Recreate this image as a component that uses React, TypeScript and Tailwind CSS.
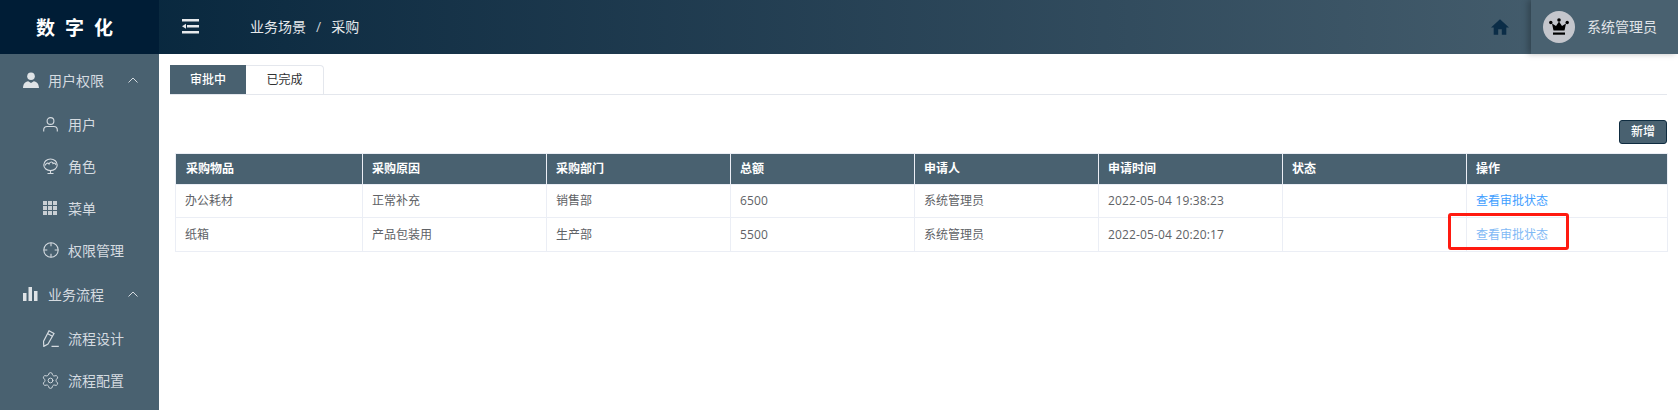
import { Settings } from "lucide-react";

const columns = [
  { title: "采购物品", width: "w-[187px]" },
  { title: "采购原因", width: "w-[184px]" },
  { title: "采购部门", width: "w-[184px]" },
  { title: "总额", width: "w-[184px]" },
  { title: "申请人", width: "w-[184px]" },
  { title: "申请时间", width: "w-[184px]" },
  { title: "状态", width: "w-[184px]" },
  { title: "操作", width: "w-[201px]" },
];

const rows = [
  ["办公耗材", "正常补充", "销售部", "6500", "系统管理员", "2022-05-04 19:38:23", ""],
  ["纸箱", "产品包装用", "生产部", "5500", "系统管理员", "2022-05-04 20:20:17", ""],
];

function Chevron() {
  return (
    <svg width="10" height="6" viewBox="0 0 10 6" fill="none" stroke="#d5dbe0" strokeWidth="1" className="ml-auto mr-[21px]">
      <path d="M0.5 5.500 5 1l4.500 4.500" />
    </svg>
  );
}

function PersonSolid() {
  return (
    <svg width="16" height="16" viewBox="0 0 16 16" fill="#dfe3e6">
      <circle cx="8" cy="4.200" r="3.800" />
      <path d="M0 16c.3-4.400 2-6.200 5.200-6.800L8 11l2.800-1.800C14 9.800 15.700 11.600 16 16z" />
    </svg>
  );
}

function Bars() {
  return (
    <svg width="15" height="14" viewBox="0 0 15 14" fill="#dfe3e6">
      <rect x="0" y="6" width="3.500" height="8" />
      <rect x="5.500" y="0" width="3.500" height="14" />
      <rect x="11" y="4" width="3.500" height="10" />
    </svg>
  );
}

function UserOutline() {
  return (
    <svg width="15" height="15" viewBox="0 0 15 15" fill="none" stroke="#d5dbe0" strokeWidth="1.100">
      <circle cx="7.500" cy="4" r="3.400" />
      <path d="M.7 14.500v-1.500c0-2.500 1.500-3.500 3.500-3.500h6.600c2 0 3.500 1 3.500 3.500v1.500" />
    </svg>
  );
}

function RoleIcon() {
  return (
    <svg width="15" height="16" viewBox="0 0 15 16" fill="none" stroke="#d5dbe0" strokeWidth="1.100">
      <path d="M.8 7a6.700 6 0 0 1 13.400 0c0 3.300-3 5.600-6.700 5.600S.8 10.300.8 7z" />
      <path d="M2 7.500c1-2.500 3-3 4-1.500 1-2.500 3.500-2.500 4-.5 1-.8 2.500-.3 3 1.500" />
      <path d="M7.500 12.500v3M4.500 15.500h6" />
    </svg>
  );
}

function GridIcon() {
  return (
    <svg width="14" height="14" viewBox="0 0 14 14" fill="#c9cfd4">
      {[0, 5, 10].map((y) =>
        [0, 5, 10].map((x) => <rect key={`${x}-${y}`} x={x} y={y} width="4" height="4" />)
      )}
    </svg>
  );
}

function TargetIcon() {
  return (
    <svg width="16" height="16" viewBox="0 0 16 16" fill="none" stroke="#d5dbe0" strokeWidth="1.100">
      <circle cx="8" cy="8" r="7.200" />
      <path d="M8 .8v3.500M8 11.700v3.500M.8 8h3.500M11.700 8h3.500" />
    </svg>
  );
}

function PencilIcon() {
  return (
    <svg width="16" height="17" viewBox="0 0 16 17" fill="none" stroke="#d5dbe0" strokeWidth="1.200">
      <path d="M6 .8l5 2.800-6 10.500-4.200 2.300-.3-5z" />
      <path d="M4.400 3.400l5 2.800M8.500 16.300h7.300" />
    </svg>
  );
}

function SideGroup({ icon, label, className = "" }: { icon: React.ReactNode; label: string; className?: string }) {
  return (
    <div className={`mb-px flex h-[44px] items-center pl-[23px] text-[14px] text-[#d5dbe0] ${className}`}>
      <span className="flex w-[25px] shrink-0">{icon}</span>
      {label}
      <Chevron />
    </div>
  );
}

function SideItem({ icon, label }: { icon: React.ReactNode; label: string }) {
  return (
    <div className="flex h-[42px] items-center pl-[43px] text-[14px] text-[#d5dbe0]">
      <span className="flex w-[25px] shrink-0">{icon}</span>
      {label}
    </div>
  );
}

export default function App() {
  return (
    <div className="flex h-[410px] w-[1678px] flex-col overflow-hidden bg-white font-['Open_Sans','Noto_Sans_CJK_SC',sans-serif] text-[12px] text-[#606266]">
      {/* Header */}
      <header className="relative z-10 flex h-[54px] shrink-0 items-center bg-gradient-to-r from-[#03233a] to-[#496170]">
        <div className="flex h-full w-[159px] shrink-0 items-center justify-center bg-[#001d36] font-['Noto_Sans_CJK_SC',serif] text-[19px] font-bold tracking-[10px] text-white">
          数字化
        </div>
        <svg width="17" height="15" viewBox="0 0 17 15" fill="#e6e9ec" className="mb-[2px] ml-[23px]">
          <rect x="0" y="0" width="17" height="2.500" />
          <rect x="5" y="6" width="12" height="2.500" />
          <path d="M0 7.200 4 4.800v5z" />
          <rect x="0" y="12" width="17" height="2.500" />
        </svg>
        <div className="mb-[2px] ml-[51px] flex items-center text-[14px] text-[#e6e9ec]">
          <span>业务场景</span>
          <span className="mx-[10px] text-[#c5cdd3]">/</span>
          <span>采购</span>
        </div>
        <svg width="18" height="16" viewBox="2 3 20 17" fill="#0b2d47" className="ml-auto mr-[22px]">
          <path d="M10 20v-6h4v6h5v-8h3L12 3 2 12h3v8z" />
        </svg>
        <div className="flex h-full w-[147px] items-center bg-[#496170] pl-[12px] shadow-[-3px_0_6px_rgba(0,0,0,0.25)]">
          <div className="flex h-[32px] w-[32px] items-center justify-center rounded-full bg-[#c4c6cc]">
            <svg width="20" height="18" viewBox="0 0 20 18" fill="#000">
              <circle cx="10" cy="2" r="1.800" />
              <circle cx="1.800" cy="4.500" r="1.700" />
              <circle cx="18.200" cy="4.500" r="1.700" />
              <path d="M10 3.500 13 8l4-2.500-1.500 7h-11L3 5.500 7 8z" />
              <rect x="4" y="14.500" width="12" height="2.200" />
            </svg>
          </div>
          <span className="mb-px ml-[12px] text-[14px] text-[#e0e4e8]">系统管理员</span>
        </div>
      </header>

      <div className="flex min-h-0 flex-1">
        {/* Sidebar */}
        <aside className="w-[159px] shrink-0 overflow-hidden bg-[#496170] pt-[4px]">
          <SideGroup icon={<PersonSolid />} label="用户权限" />
          <SideItem icon={<UserOutline />} label="用户" />
          <SideItem icon={<RoleIcon />} label="角色" />
          <SideItem icon={<GridIcon />} label="菜单" />
          <SideItem icon={<TargetIcon />} label="权限管理" />
          <SideGroup icon={<Bars />} label="业务流程" className="mt-px" />
          <SideItem icon={<PencilIcon />} label="流程设计" />
          <SideItem icon={<Settings size={19} strokeWidth={1.2} className="-ml-[2px]" />} label="流程配置" />
        </aside>

        {/* Main */}
        <main className="min-w-0 flex-1 pt-[11px] pl-[11px] pr-[11px]">
          <div className="flex h-[30px] border-b border-[#e4e7ed]">
            <div className="flex w-[76px] items-center justify-center bg-[#496170] font-medium text-white">审批中</div>
            <div className="flex w-[78px] items-center justify-center rounded-tr border-t border-r border-[#e4e7ed] text-[#303133]">已完成</div>
          </div>

          <div className="mt-[25px] flex justify-end">
            <button className="h-[24px] w-[48px] rounded-[3px] border border-[#0f2c40] bg-[#496170] font-medium text-white">新增</button>
          </div>

          <table className="relative mt-[9px] ml-[5px] w-[1492px] table-fixed border-collapse">
            <thead>
              <tr className="h-[31px] bg-[#496170] text-left font-bold text-white">
                {columns.map((c) => (
                  <th key={c.title} className={`${c.width} border border-[#ebeef5] px-[9px] font-bold first:pl-[10px] [&:not(:first-child)]:border-l-white`}>
                    {c.title}
                  </th>
                ))}
              </tr>
            </thead>
            <tbody>
              {rows.map((row, i) => (
                <tr key={row[0]} className={i === 1 ? "h-[34px]" : "h-[33px]"}>
                  {row.map((cell, j) => (
                    <td key={j} className={`border border-[#ebeef5] px-[9px] ${j === 3 || j === 5 ? "tracking-[0.15px]" : ""}`}>
                      {cell}
                    </td>
                  ))}
                  <td className="relative border border-[#ebeef5] px-[9px]">
                    <span className={i === 1 ? "text-[#7fb9f5]" : "text-[#409eff]"}>查看审批状态</span>
                    {i === 1 && (
                      <span className="absolute top-[-5px] left-[-19px] h-[37px] w-[121px] rounded-[3px] border-[3px] border-[#ff1a10]" />
                    )}
                  </td>
                </tr>
              ))}
            </tbody>
          </table>
        </main>
      </div>
    </div>
  );
}
